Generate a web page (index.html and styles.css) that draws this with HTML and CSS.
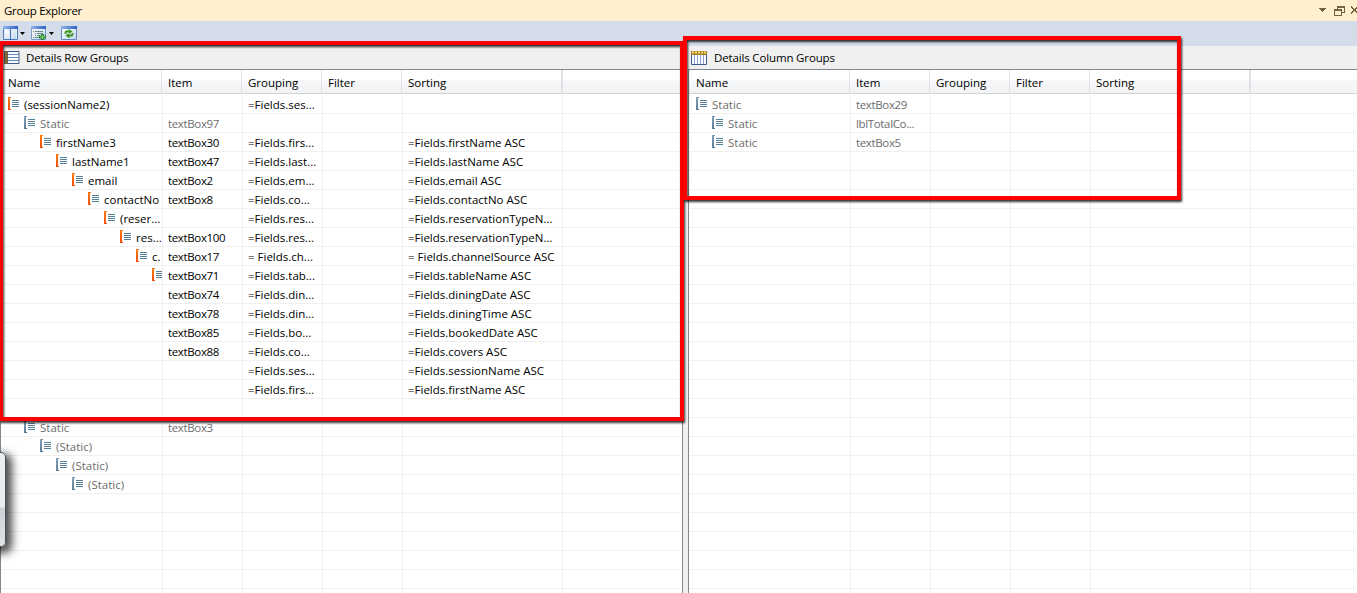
FILE: index.html
```
<!DOCTYPE html>
<html>
  <head>
    <meta charset="utf-8">
    <title>Group Explorer</title>
    <link rel="stylesheet" href="styles.css">
  </head>
  <body>
    <svg class="defs" width="0" height="0">
      <linearGradient id="orange" x1="0" y1="0" x2="0" y2="1"><stop offset="0" stop-color="#ff7a10"/><stop offset="1" stop-color="#f0500a"/></linearGradient>
      <linearGradient id="blue" x1="0" y1="0" x2="1" y2="1"><stop offset="0" stop-color="#8fabbe"/><stop offset="1" stop-color="#3f6684"/></linearGradient>
      <linearGradient id="bar" x1="0" y1="0" x2="1" y2="0"><stop offset="0" stop-color="#8fb4ee"/><stop offset="1" stop-color="#2f63c4"/></linearGradient>
      <linearGradient id="sheet" x1="0" y1="0" x2="1" y2="1"><stop offset="0" stop-color="#fff"/><stop offset="1" stop-color="#c3d5ee"/></linearGradient>
      <symbol id="lines" viewBox="0 0 12 13"><path d="M4 3.500h7M4 5.500h7M4 7.500h7M4 9.500h7" stroke="#557f98"/></symbol>
      <symbol id="group" viewBox="0 0 12 13"><path d="M0 0h3v1H2v11h1v1H0z" fill="url(#orange)"/><use href="#lines"/></symbol>
      <symbol id="static" viewBox="0 0 12 13"><path d="M0 0h3v1H2v11h1v1H0z" fill="url(#blue)"/><use href="#lines"/></symbol>
    </svg>
    <div class="titlebar">
      <span class="title">Group Explorer</span>
      <svg width="41" height="21" shape-rendering="crispEdges">
        <path d="M2 8h8l-4 4z" fill="#75633d"/>
        <path d="M21.500 10V6.500h7v6H26M21 7.500h8M18.500 9.500h7v6h-7zM18 10.500h8" fill="none" stroke="#75633d"/>
        <path d="M35 6.500l7 7M35 13.500l7-7" stroke="#75633d" stroke-width="1.800"/>
      </svg>
    </div>
    <div class="toolbar">
      <svg width="80" height="25">
        <!-- panes -->
        <path d="M3.500 5.500h14v13h-14z" fill="#e4eefb" stroke="#4d79bd"/>
        <path d="M3 5h15v3H3z" fill="url(#bar)"/>
        <path d="M5 9h4v9H5zM12 9h4v9h-4z" fill="url(#sheet)"/>
        <path d="M10.500 8v11" stroke="#3c6bb5"/>
        <path d="M20 11h5l-2.500 3zM49 11h5l-2.500 3z" fill="#000"/>
        <!-- add group -->
        <path d="M31.500 5.500h14v13h-14z" fill="url(#sheet)" stroke="#7c9cc8"/>
        <path d="M31 5h15v3H31z" fill="url(#bar)"/>
        <path d="M33 10.500h1M35 10.500h8M35 12.500h1M37 12.500h6M35 14.500h1M37 14.500h3M33 16.500h1M35 16.500h4" stroke="#6c8b83"/>
        <path d="M42.500 13v6M39 16h7" stroke="#2c8435" stroke-width="3"/>
        <path d="M42.500 14v4M40 16h5" stroke="#83cf72"/>
        <!-- refresh -->
        <path d="M61.500 5.500h15v13h-15z" fill="url(#sheet)" stroke="#6488c0"/>
        <path d="M61 5h16v3H61z" fill="url(#bar)"/>
        <path d="M65.500 13v-1.500q0-1 1-1H69M72.500 12v1.500q0 1-1 1H69" fill="none" stroke="#3c981c" stroke-width="1.800"/>
        <path d="M68.500 8l4 2.500-4 3zM69.500 11.500l-4 3 4 3z" fill="#3c981c"/>
      </svg>
    </div>
    <div class="panes">
      <div class="pane rows">
        <div class="caption">
          <svg width="16" height="14">
            <path d="M0 .5h15v12H0z" fill="#f8fbff" stroke="#3e5c88"/>
            <path d="M4 3.500h11M4 6.500h11M4 9.500h11" stroke="#6a88b4"/>
            <path d="M0 0h4v13H0z" fill="#6d6146"/>
            <path d="M1 2h2M1 5h2M1 8h2M1 11h2" stroke="#a58b4b"/>
          </svg>
          Details Row Groups
        </div>
        <div class="grid" id="left"></div>
      </div>
      <div class="pane cols">
        <div class="caption">
          <svg width="16" height="14">
            <path d="M.5 1.500h15v12H.5z" fill="#f8fbff" stroke="#3e5c88"/>
            <path d="M3.500 4v9M6.500 4v9M9.500 4v9M12.500 4v9" stroke="#8ba5cc"/>
            <path d="M0 0h16v4H0z" fill="#a57d28"/>
            <path d="M1 1.500h2M4 1.500h2M7 1.500h2M10 1.500h2M13 1.500h2" stroke="#ffdf72" stroke-width="2"/>
          </svg>
          Details Column Groups
        </div>
        <div class="grid" id="right"></div>
      </div>
    </div>
    <div class="popup"></div>
    <div class="mark mark-rows"></div>
    <div class="mark mark-cols"></div>
    <script src="grid.js"></script>
  </body>
</html>
```
FILE: styles.css
```
body {
  margin: 0;
  height: 593px;
  overflow: hidden;
  position: relative;
  font: 11.5px "Open Sans", sans-serif;
  color: #000;
  background: #f0f0f0;
}
.defs { position: absolute; }
.titlebar {
  display: flex;
  justify-content: space-between;
  height: 21px;
  line-height: 21px;
  padding-left: 4px;
  letter-spacing: -0.3px;
  background: #ffefcf;
}
.toolbar { height: 25px; background: #d5dce9; }
.panes { display: flex; gap: 5px; height: 547px; }
.pane { width: 683px; display: flex; flex-direction: column; }
.pane.cols { flex: 1; }
.caption {
  display: flex;
  align-items: center;
  gap: 6px;
  height: 23px;
  padding-left: 4px;
  letter-spacing: -0.15px;
}
.cols .caption { padding-left: 3px; gap: 7px; }
.grid {
  flex: 1;
  overflow: hidden;
  background: #fff;
  border: solid #828790;
  border-width: 1px 1px 0;
}
.cols .grid { border-right: 0; }
.row {
  display: grid;
  grid-template-columns: 161px 80px 80px 80px 160px 1fr;
  height: 18px;
  line-height: 20px;
  margin: 0 1px;
  border-bottom: 1px solid #f0f0f0;
}
.cell {
  border-right: 1px solid #f0f0f0;
  padding-left: 5px;
  overflow: hidden;
  white-space: nowrap;
}
.cell:nth-child(2) { letter-spacing: -0.35px; }
.cell:last-child { border-right: 0; }
.head {
  height: 23px;
  line-height: 26px;
  margin: 0 0 1px;
  border-bottom: 1px solid #d5d5d5;
  background: linear-gradient(#fff 10px, #f7f8fa 10px, #f1f2f4);
}
.head .cell { border-color: #e0e1e4; padding-left: 6px; }
.head .cell:first-child { padding-left: 7px; }
.head .cell:nth-child(2) { letter-spacing: 0; }
.head .cell:nth-child(5) { border-right-width: 2px; margin-right: -1px; }
.name { display: flex; gap: 4px; }
.name svg { flex: none; margin-top: 2px; }
.dim { color: #6d6d6d; }
.mark {
  position: absolute;
  box-sizing: border-box;
  border: 4px solid #f00;
  filter: drop-shadow(1px 2px 1px rgba(0,0,0,.8));
}
.mark-rows { left: -1px; top: 41px; width: 685px; height: 380px; }
.mark-cols { left: 683px; top: 36px; width: 498px; height: 164px; }
.popup {
  position: absolute;
  left: -20px;
  top: 452px;
  width: 24px;
  height: 93px;
  border: 1px solid #45525c;
  border-radius: 5px;
  background: linear-gradient(#e9edf0 54px, #ccd2d8 55px, #dfe3e6);
  box-shadow: 4px 4px 9px 2px rgba(0,0,0,.7);
}
```
FILE: grid.js
```
// [depth, icon, name, item, grouping, sorting]
var left = [
  [0, 'group', '(sessionName2)', '', '=Fields.ses...', ''],
  [1, 'static', 'Static', 'textBox97', '', ''],
  [2, 'group', 'firstName3', 'textBox30', '=Fields.firs...', '=Fields.firstName ASC'],
  [3, 'group', 'lastName1', 'textBox47', '=Fields.last...', '=Fields.lastName ASC'],
  [4, 'group', 'email', 'textBox2', '=Fields.em...', '=Fields.email ASC'],
  [5, 'group', 'contactNo', 'textBox8', '=Fields.co...', '=Fields.contactNo ASC'],
  [6, 'group', '(reser...', '', '=Fields.res...', '=Fields.reservationTypeN...'],
  [7, 'group', 'res...', 'textBox100', '=Fields.res...', '=Fields.reservationTypeN...'],
  [8, 'group', 'c.', 'textBox17', '= Fields.ch...', '= Fields.channelSource ASC'],
  [9, 'group', '', 'textBox71', '=Fields.tab...', '=Fields.tableName ASC'],
  [0, '', '', 'textBox74', '=Fields.din...', '=Fields.diningDate ASC'],
  [0, '', '', 'textBox78', '=Fields.din...', '=Fields.diningTime ASC'],
  [0, '', '', 'textBox85', '=Fields.bo...', '=Fields.bookedDate ASC'],
  [0, '', '', 'textBox88', '=Fields.co...', '=Fields.covers ASC'],
  [0, '', '', '', '=Fields.ses...', '=Fields.sessionName ASC'],
  [0, '', '', '', '=Fields.firs...', '=Fields.firstName ASC'],
  [0, '', '', '', '', ''],
  [1, 'static', 'Static', 'textBox3', '', ''],
  [2, 'static', '(Static)', '', '', ''],
  [3, 'static', '(Static)', '', '', ''],
  [4, 'static', '(Static)', '', '', '']
];
var right = [
  [0, 'static', 'Static', 'textBox29', '', ''],
  [1, 'static', 'Static', 'lblTotalCo...', '', ''],
  [1, 'static', 'Static', 'textBox5', '', '']
];

function cell(text) {
  return '<div class="cell">' + text + '</div>';
}

function fill(id, rows) {
  var html = '<div class="row head">' + ['Name', 'Item', 'Grouping', 'Filter', 'Sorting', ''].map(cell).join('') + '</div>';
  for (var i = 0; i < 27; i++) {
    var r = rows[i] || [0, '', '', '', '', ''];
    var icon = r[1] ? '<svg width="12" height="13"><use href="#' + r[1] + '"/></svg>' : '';
    html += '<div class="row' + (r[1] == 'static' ? ' dim' : '') + '">' +
      '<div class="cell name" style="padding-left:' + (6 + r[0] * 16) + 'px">' + icon + '<span>' + r[2] + '</span></div>' +
      cell(r[3]) + cell(r[4]) + cell('') + cell(r[5]) + cell('') + '</div>';
  }
  document.getElementById(id).innerHTML = html;
}

fill('left', left);
fill('right', right);
```
